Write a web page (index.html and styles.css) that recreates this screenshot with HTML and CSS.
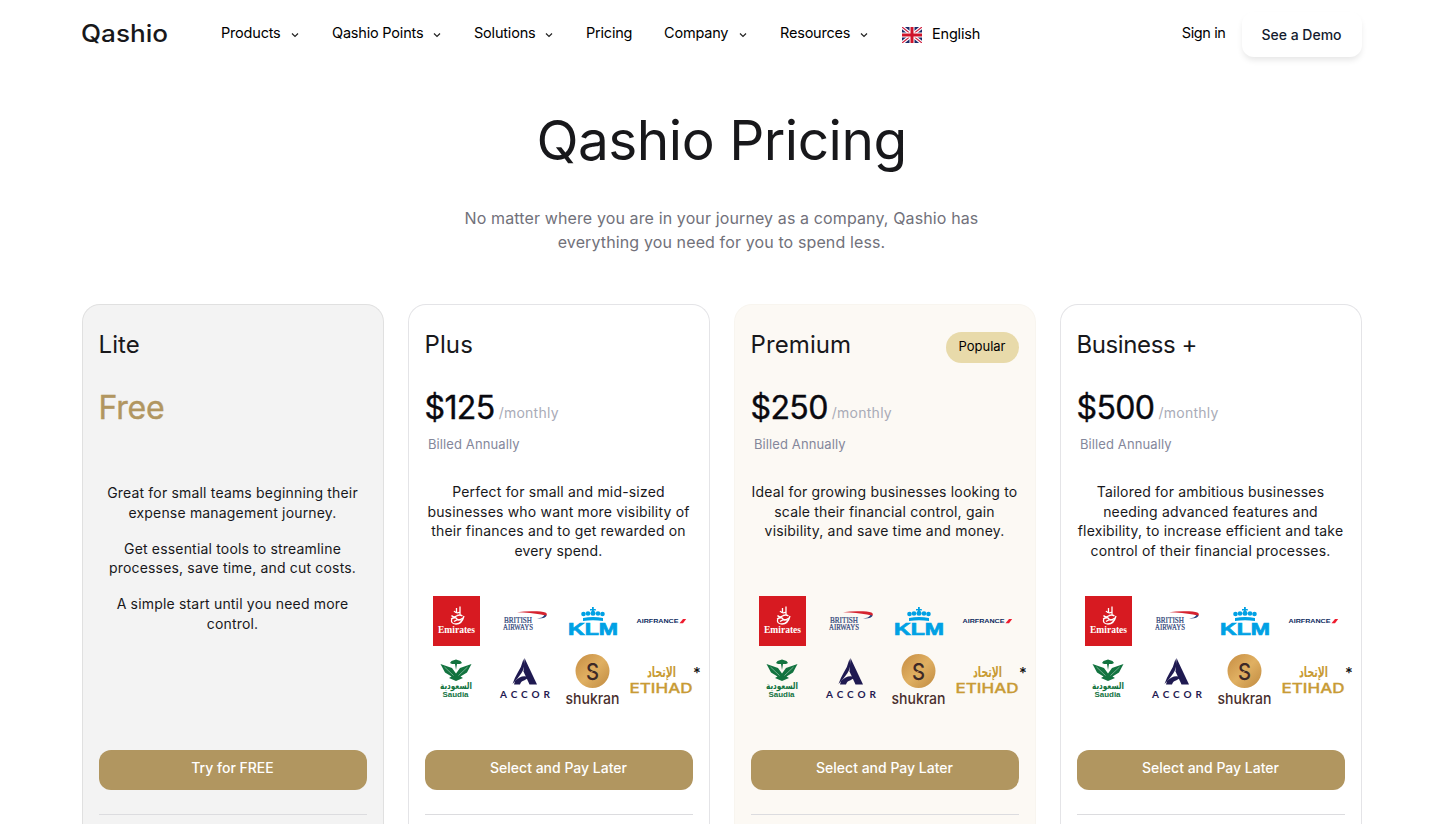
FILE: index.html
```html
<!DOCTYPE html>
<html lang="en">
<head>
  <meta charset="UTF-8" />
  <meta name="viewport" content="width=device-width, initial-scale=1.0" />
  <title>Qashio Pricing</title>
  <link rel="stylesheet" href="styles.css">
</head>
<body>
  <header class="navbar">
    <a class="logo">
      <svg width="87" height="30" viewBox="0 0 87 30">
        <text x="-1" y="23" textLength="87" lengthAdjust="spacingAndGlyphs">Qashio</text>
      </svg>
    </a>
    <nav class="nav-links">
      <a><span class="products">Products</span><svg viewBox="0 0 10 10"><path id="chevron" d="M2 3.500L5 6.500L8 3.500" /></svg></a>
      <a><span class="points">Qashio Points</span><svg><use href="#chevron" /></svg></a>
      <a><span class="solutions">Solutions</span><svg><use href="#chevron" /></svg></a>
      <a><span class="pricing-link">Pricing</span></a>
      <a><span class="company">Company</span><svg><use href="#chevron" /></svg></a>
      <a><span class="resources">Resources</span><svg><use href="#chevron" /></svg></a>
      <a class="language">
        <svg class="flag" viewBox="0 0 20 16">
          <rect width="20" height="16" fill="#1b2a68" />
          <path d="M0 0l20 16M20 0L0 16" stroke="#fff" stroke-width="3.600" />
          <path d="M0 0l20 16M20 0L0 16" stroke="#d02040" stroke-width="1.200" />
          <path d="M10 0v16M0 8h20" stroke="#fff" stroke-width="5" />
          <path d="M10 0v16M0 8h20" stroke="#cf142b" stroke-width="3" />
        </svg>
        <span>English</span>
      </a>
    </nav>
    <div class="nav-actions">
      <a class="sign-in">Sign in</a>
      <a class="demo">See a Demo</a>
    </div>
  </header>

  <section class="hero">
    <h1>Qashio Pricing</h1>
    <p>No matter where you are in your journey as a company, Qashio has<br>everything you need for you to spend less.</p>
  </section>

  <main class="plans">
    <article class="card lite">
      <div class="card-head"><h2>Lite</h2></div>
      <div class="price"><strong>Free</strong></div>
      <div class="billed"></div>
      <div class="desc">
        <p>Great for small teams beginning their<br>expense management journey.</p>
        <p>Get essential tools to streamline<br>processes, save time, and cut costs.</p>
        <p>A simple start until you need more<br>control.</p>
      </div>
      <a class="btn">Try for FREE</a>
      <hr>
    </article>

    <article class="card">
      <div class="card-head"><h2>Plus</h2></div>
      <div class="price"><strong>$125</strong><span>/monthly</span></div>
      <div class="billed">Billed Annually</div>
      <div class="desc">
        <p>Perfect for small and mid-sized<br>businesses who want more visibility of<br>their finances and to get rewarded on<br>every spend.</p>
      </div>
      <svg class="partners" viewBox="0 0 284 120">
        <defs>
          <linearGradient id="gold" x1="0" y1="0" x2="1" y2="1">
            <stop offset="0" stop-color="#c68c42" />
            <stop offset="0.500" stop-color="#e0b062" />
            <stop offset="1" stop-color="#c08a40" />
          </linearGradient>
        </defs>
        <g id="partners">
          <!-- Emirates -->
          <rect x="8" y="6" width="47" height="50" fill="#d71a21" />
          <path d="M31.500 18v5M35 16.500v9M29 21q2 3 6 1M26.500 25.500q2 2.500 5 .5t6 0M26 29q5-2.500 6 0t6-1M27 28q-2 6 4 6t8-8M29 31.500q4-3 8-1" fill="none" stroke="#fff" stroke-width="1.300" />
          <text x="13" y="42.500" textLength="37" lengthAdjust="spacingAndGlyphs" class="serif" font-size="10.500" fill="#fff">Emirates</text>
          <!-- British Airways -->
          <path d="M92 22.300q9-1.500 20-1 8 .3 9.500 2 1 1.400-.5 3.200-1-1.500-5-2-10-1.700-24-2.200z" fill="#d5232f" />
          <path d="M112 28.500q6-.5 7.500-3.500l2 .5q-1 3.500-9.500 3z" fill="#263f7c" />
          <text x="79" y="33" textLength="28" lengthAdjust="spacingAndGlyphs" class="airways">BRITISH</text>
          <text x="78" y="39.500" textLength="30" lengthAdjust="spacingAndGlyphs" class="airways">AIRWAYS</text>
          <!-- KLM -->
          <g fill="#00a1e4">
            <path d="M167 17h1.800v2h2v1.500h-2v2H167v-2h-2V19h2zM158 28q10-2 20 0v3q-10-1.500-20 0z" />
            <circle cx="158.500" cy="24" r="2.300" />
            <circle cx="163" cy="23.500" r="2.300" />
            <circle cx="168" cy="23.300" r="2.500" />
            <circle cx="173" cy="23.500" r="2.300" />
            <circle cx="177.500" cy="24" r="2.300" />
            <text x="143" y="45" textLength="50" lengthAdjust="spacingAndGlyphs" class="sans" font-size="17" stroke="#00a1e4" stroke-width="0.700">KLM</text>
          </g>
          <!-- Air France -->
          <text x="211.500" y="33.300" textLength="42" lengthAdjust="spacingAndGlyphs" class="sans" font-size="6" fill="#0b2a5e">AIRFRANCE</text>
          <path d="M254.500 33.300l3.500-4.300h3.200l-3.200 4.300z" fill="#ee1c2e" />
          <!-- Saudia: crossed swords under a palm -->
          <g fill="#12733f">
            <path d="M15.500 74l11.500 4 4 5.500 4-5.500 11.500-4-4.500 8.500-6.500 4 2.500 1.500-7 3-7-3 2.500-1.500-6.500-4z" />
            <path d="M25 73l1.500-2 4.500-1.500 4.500 1.500 1.500 2-2 1h-3l-1 6-1-6h-3z" />
          </g>
          <path d="M19.500 77l9 8.500M42.500 77l-9 8.500" stroke="#fff" stroke-width="0.400" />
          <text x="15" y="99" textLength="32" lengthAdjust="spacingAndGlyphs" class="arabic" font-size="9.500" fill="#12733f">السعودية</text>
          <text x="17.500" y="107" textLength="26" lengthAdjust="spacingAndGlyphs" class="sans" font-size="7.500" fill="#12733f">Saudia</text>
          <!-- Accor -->
          <g fill="#1f1a51">
            <path d="M99.500 68l12.500 26.500h-7.500l-6-13z" />
            <path d="M98.500 69q2 8-2 14t-9 11q2-6 5-11 4-6 6-14z" />
            <path d="M90 91q7-7 14-3.500l-5 3q-3 .5-4 4h-6z" />
          </g>
          <text x="75" y="107.500" textLength="50" lengthAdjust="spacing" class="accor">ACCOR</text>
          <!-- Shukran -->
          <circle cx="167.500" cy="81" r="17" fill="url(#gold)" />
          <text x="161" y="89.500" textLength="13" lengthAdjust="spacingAndGlyphs" class="inter" font-size="23" fill="#3d2927">S</text>
          <path d="M163 84l9-6" stroke="#d9a657" stroke-width="0.800" />
          <text x="140.500" y="113.500" textLength="54" lengthAdjust="spacingAndGlyphs" class="inter" font-size="15" fill="#4a2f2d">shukran</text>
          <!-- Etihad -->
          <g fill="#c89b35">
            <text x="222" y="87" textLength="29" lengthAdjust="spacingAndGlyphs" class="arabic" font-size="15">الإتحاد</text>
            <text x="204.500" y="102.500" textLength="63" lengthAdjust="spacingAndGlyphs" class="inter" font-size="13.500" stroke="#c89b35" stroke-width="0.300">ETIHAD</text>
          </g>
          <text x="268" y="87.500" class="inter" font-size="15" fill="#111">*</text>
        </g>
      </svg>
      <a class="btn">Select and Pay Later</a>
      <hr>
    </article>

    <article class="card premium">
      <div class="card-head"><h2>Premium</h2><span class="badge">Popular</span></div>
      <div class="price"><strong>$250</strong><span>/monthly</span></div>
      <div class="billed">Billed Annually</div>
      <div class="desc">
        <p>Ideal for growing businesses looking to<br>scale their financial control, gain<br>visibility, and save time and money.</p>
      </div>
      <svg class="partners"><use href="#partners" /></svg>
      <a class="btn">Select and Pay Later</a>
      <hr>
    </article>

    <article class="card business">
      <div class="card-head"><h2>Business +</h2></div>
      <div class="price"><strong>$500</strong><span>/monthly</span></div>
      <div class="billed">Billed Annually</div>
      <div class="desc">
        <p>Tailored for ambitious businesses<br>needing advanced features and<br>flexibility, to increase efficient and take<br>control of their financial processes.</p>
      </div>
      <svg class="partners"><use href="#partners" /></svg>
      <a class="btn">Select and Pay Later</a>
      <hr>
    </article>
  </main>
</body>
</html>
```
FILE: styles.css
```css
* {
  box-sizing: border-box;
}
body {
  margin: 0;
  height: 824px;
  overflow: hidden;
  background: #fff;
  color: #18181b;
  font-family: Inter, "Liberation Sans", sans-serif;
}
h1, h2, p {
  margin: 0;
  font-weight: 400;
}
.sans {
  font-family: "Liberation Sans", sans-serif;
  font-weight: bold;
}
.serif {
  font-family: "Liberation Serif", serif;
  font-weight: bold;
}
.inter {
  font-family: Inter, sans-serif;
  font-weight: 500;
}
.arabic {
  font-family: "DejaVu Sans", sans-serif;
  font-weight: bold;
}
.airways {
  font-family: "Liberation Serif", serif;
  font-size: 7.5px;
  fill: #2c4277;
  stroke: #2c4277;
  stroke-width: 0.2;
}
.accor {
  font-family: Lato, sans-serif;
  font-size: 10px;
  font-weight: bold;
  fill: #1f1a51;
}

/* navbar */
.navbar {
  display: flex;
  width: 1280px;
  height: 68px;
  margin: 0 auto;
  align-items: center;
}
.logo {
  width: 139.5px;
  height: 30px;
}
.logo text {
  font-size: 24px;
  font-weight: 500;
  fill: #18181b;
}
.nav-links {
  display: flex;
  gap: 32px;
  margin-top: -3px;
  font-size: 14.5px;
  letter-spacing: -0.2px;
  color: #000;
}
.nav-links a {
  display: flex;
  align-items: center;
  white-space: nowrap;
}
.nav-links a > svg:not(.flag) {
  width: 10px;
  height: 10px;
  margin: 4px 0 0 9px;
  fill: none;
  stroke: #222;
  stroke-width: 1.2;
}
.products { width: 60px; }
.points { width: 91px; }
.solutions { width: 61px; }
.pricing-link { width: 46px; }
.company { width: 65px; }
.resources { width: 69.5px; }
.nav-links .language {
  margin: 2px 0 0 1px;
}
.flag {
  width: 20px;
  height: 16px;
  margin: 2px 10.5px 0 0;
}
.nav-actions {
  display: flex;
  align-items: center;
  margin-left: auto;
  font-size: 14.5px;
  letter-spacing: -0.4px;
}
.sign-in {
  margin: -3px 16px 0 0;
  color: #000;
}
.demo {
  width: 120px;
  height: 45px;
  margin-top: 1px;
  border-radius: 12px;
  line-height: 45px;
  text-align: center;
  font-size: 14px;
  font-weight: 500;
  letter-spacing: 0;
  color: #131b2e;
  box-shadow: 0 4px 6px -1px rgba(0, 0, 0, 0.1);
}

/* hero */
.hero {
  padding-top: 37px;
  text-align: center;
}
.hero h1 {
  font-size: 55px;
  line-height: 70px;
  letter-spacing: -0.5px;
}
.hero p {
  margin-top: 31px;
  font-size: 16px;
  line-height: 24px;
  letter-spacing: 0.12px;
  color: #71717a;
}

/* plans */
.plans {
  display: grid;
  grid-template-columns: repeat(4, 302px);
  gap: 24px;
  width: 1280px;
  height: 520px;
  margin: 50px auto 0;
  overflow: hidden;
}
.card {
  display: flex;
  flex-direction: column;
  height: 520px;
  padding: 24px 16px 0;
  border: 1px solid #e4e4e7;
  border-bottom: 0;
  border-radius: 18px 18px 0 0;
}
.lite {
  background: #f3f3f3;
  border-color: #e0e0e0;
}
.premium {
  background: #fcf9f4;
  border-color: #f8f5ef;
}
.card-head {
  display: flex;
  justify-content: space-between;
  height: 34px;
}
.card-head h2 {
  font-size: 24px;
  line-height: 32px;
  letter-spacing: 0.1px;
}
.business h2 {
  letter-spacing: -0.4px;
}
.badge {
  width: 73px;
  height: 31px;
  margin-top: 3px;
  border-radius: 16px;
  background: #e8daaa;
  color: #000;
  font-size: 13px;
  line-height: 29px;
  text-align: center;
}
.price {
  display: flex;
  align-items: baseline;
  height: 40px;
  margin-top: 25px;
  color: #09090f;
}
.price strong {
  font-size: 32px;
  font-weight: 400;
  line-height: 40px;
  letter-spacing: -0.6px;
  -webkit-text-stroke: 0.4px currentColor;
}
.price span {
  position: relative;
  top: -1px;
  margin-left: 4px;
  font-size: 14px;
  letter-spacing: 0.25px;
  color: #a9abb7;
}
.lite .price strong {
  color: #b19660;
  letter-spacing: -0.2px;
}
.billed {
  height: 20px;
  margin: 6px 0 0 3.5px;
  font-size: 13px;
  line-height: 20px;
  letter-spacing: 0.1px;
  color: #84879b;
}
.desc {
  height: 114px;
  margin: 28px -10px 0;
  text-align: center;
  font-size: 14px;
  line-height: 19.5px;
  letter-spacing: 0.18px;
}
.desc p + p {
  margin-top: 16.5px;
}
.lite .desc {
  margin-top: 29px;
}
.partners {
  display: block;
  flex: none;
  width: 284px;
  height: 120px;
  margin-top: -6px;
}
.btn {
  flex: none;
  height: 40px;
  margin-top: 40px;
  border-radius: 12px;
  background: #b19660;
  color: #fff;
  font-size: 14px;
  font-weight: 500;
  line-height: 36px;
  text-align: center;
}
.lite .btn {
  margin-top: 153px;
}
.card hr {
  width: 100%;
  margin: 24px 0 0;
  border: 0;
  border-top: 1px solid #dcdcdf;
}
```
